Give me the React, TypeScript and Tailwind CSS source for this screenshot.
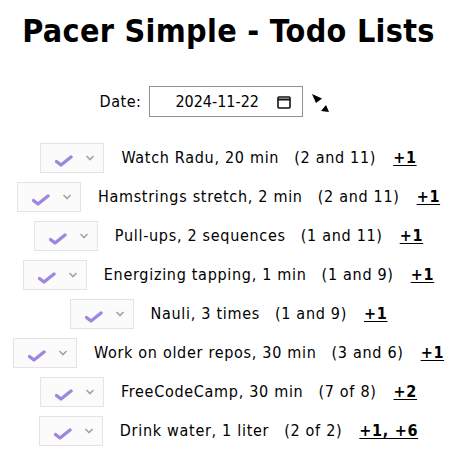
import React from "react";

type Todo = {
  name: string;
  count: string;
  plus: string;
};

const todos: Todo[] = [
  { name: "Watch Radu, 20 min", count: "(2 and 11)", plus: "+1" },
  { name: "Hamstrings stretch, 2 min", count: "(2 and 11)", plus: "+1" },
  { name: "Pull-ups, 2 sequences", count: "(1 and 11)", plus: "+1" },
  { name: "Energizing tapping, 1 min", count: "(1 and 9)", plus: "+1" },
  { name: "Nauli, 3 times", count: "(1 and 9)", plus: "+1" },
  { name: "Work on older repos, 30 min", count: "(3 and 6)", plus: "+1" },
  { name: "FreeCodeCamp, 30 min", count: "(7 of 8)", plus: "+2" },
  { name: "Drink water, 1 liter", count: "(2 of 2)", plus: "+1, +6" },
];

function DoneSelect() {
  return (
    <div className="flex h-[30px] w-[64px] shrink-0 items-center border border-[#e4e4e7] bg-[#fbfbfb] pl-[14px] pr-[8px]">
      <svg width="18" height="12" viewBox="0 0 18 12" className="mt-[6px]">
        <path
          d="M1.5 6.5 L6 10 L16 2"
          fill="none"
          stroke="#9f87dd"
          strokeWidth="3.4"
          strokeLinecap="round"
          strokeLinejoin="round"
        />
      </svg>
      <svg width="10" height="6" viewBox="0 0 10 6" className="ml-auto">
        <path d="M1.5 1 L5 4.5 L8.5 1" fill="none" stroke="#a3a3a3" strokeWidth="1.6" />
      </svg>
    </div>
  );
}

function TodoRow({ todo }: { todo: Todo }) {
  return (
    <li className="flex items-center text-[16px] tracking-[0.7px]">
      <DoneSelect />
      <span className="ml-[17px]">{todo.name}</span>
      <span className="ml-[15px]">{todo.count}</span>
      <a href="#" className="ml-[17px] font-bold underline underline-offset-2">
        {todo.plus}
      </a>
    </li>
  );
}

export default function App() {
  return (
    <div
      className="min-h-screen bg-white text-black"
      style={{ fontFamily: '"DejaVu Sans Condensed", "DejaVu Sans", sans-serif' }}
    >
      <h1 className="pt-[12px] text-center text-[32px] leading-[38px] font-bold tracking-[0.3px]">
        Pacer Simple - Todo Lists
      </h1>

      <div className="mt-[36px] flex items-center justify-center">
        <label className="text-[16px] tracking-[0.5px]">Date:</label>
        <div className="ml-[8px] flex h-[31px] w-[154px] items-center border border-[#8f8f9d] bg-white pl-[25px] pr-[11px] text-[16px]">
          <span>2024-11-22</span>
          <svg width="14" height="14" viewBox="0 0 14 14" className="ml-auto">
            <rect x="1" y="2" width="12" height="11" rx="1" fill="none" stroke="#111" strokeWidth="1.6" />
            <line x1="1" y1="4.5" x2="13" y2="4.5" stroke="#111" strokeWidth="2" />
          </svg>
        </div>
        <svg width="20" height="20" viewBox="0 0 20 20" className="ml-[8px] mr-[26px] mt-[2px]">
          <polygon points="1,1 11,5.5 5,10" fill="#000" />
          <polygon points="15,12 18,19 10,18" fill="#000" />
        </svg>
      </div>

      <ul className="mt-[26px] flex flex-col items-center gap-[9px] pb-4">
        {todos.map((todo) => (
          <TodoRow key={todo.name} todo={todo} />
        ))}
      </ul>
    </div>
  );
}
